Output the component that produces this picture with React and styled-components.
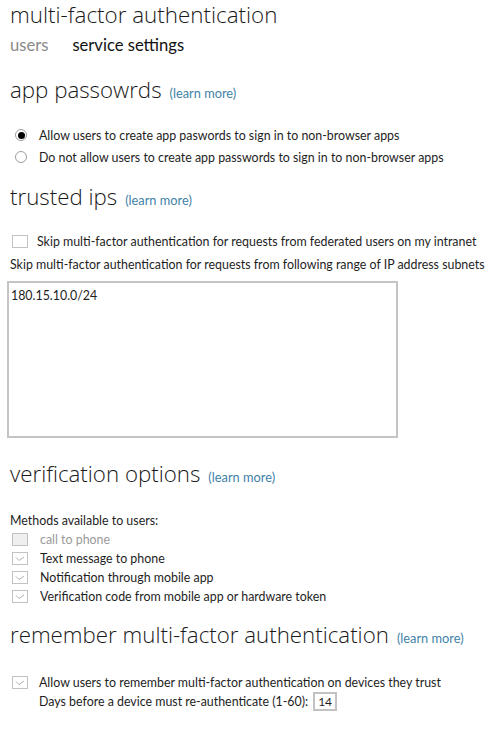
import React from 'react';
import styled, { createGlobalStyle } from 'styled-components';

const GlobalStyle = createGlobalStyle`
  body {
    margin: 0;
    background: #fff;
    font-family: Lato, "Open Sans", sans-serif;
    color: #1e1e1e;
  }
`;

const Page = styled.div`
  display: flex;
  flex-direction: column;
  padding: 2px 0 0 10px;
  width: 489px;
`;

const Title = styled.h1`
  margin: 0;
  font-family: "Open Sans", sans-serif;
  font-weight: 300;
  font-size: 22.4px;
  line-height: 26px;
  color: #1a1a1a;
`;

const Tabs = styled.div`
  display: flex;
  gap: 24px;
  margin-top: 7px;
  font-size: 16.6px;
  line-height: 20px;
`;

const Tab = styled.span`
  color: ${p => (p.$active ? '#111' : '#8a8a8a')};
`;

const SectionHead = styled.h2`
  display: flex;
  align-items: baseline;
  gap: 8px;
  margin: ${p => p.$top || '24px'} 0 0;
  font-family: "Open Sans", sans-serif;
  font-weight: 300;
  font-size: 22.3px;
  line-height: 26px;
  color: #1a1a1a;
`;

const Learn = styled.a`
  font-family: Lato, sans-serif;
  font-weight: 400;
  font-size: 12.8px;
  color: #3f82a8;
  text-decoration: none;
`;

const List = styled.div`
  display: flex;
  flex-direction: column;
  margin-top: ${p => p.$top || '0'};
`;

const Row = styled.label`
  display: flex;
  align-items: center;
  gap: ${p => p.$gap || '12px'};
  height: ${p => p.$h || '19px'};
  padding-left: ${p => p.$indent || '0'};
  font-size: 12.4px;
  color: ${p => (p.$disabled ? '#9a9a9a' : '#1e1e1e')};
`;

const Radio = styled.span`
  box-sizing: border-box;
  width: 12px;
  height: 12px;
  border-radius: 50%;
  border: 1px solid #9d9d9d;
  background: #fff;
  display: flex;
  align-items: center;
  justify-content: center;
  margin-left: 5px;
  &::after {
    content: '';
    width: 7px;
    height: 7px;
    border-radius: 50%;
    background: ${p => (p.$on ? '#000' : 'transparent')};
  }
`;

const Box = styled.span`
  box-sizing: border-box;
  width: 16px;
  height: 13px;
  margin-left: 2px;
  border: 1px solid #c2c2c2;
  background: ${p => (p.$disabled ? '#efefef' : '#fff')};
  display: flex;
  align-items: center;
  justify-content: center;
  flex-shrink: 0;
`;

const Text = styled.div`
  font-size: 12.4px;
  line-height: 19px;
  margin-top: ${p => p.$top || '0'};
`;

const IpArea = styled.div`
  box-sizing: border-box;
  margin: 7px 0 0 -3px;
  width: 391px;
  height: 157px;
  border: 2px solid #c4c4c4;
  padding: 5px 2px;
  font-size: 12.4px;
  line-height: 16px;
`;

const DaysBox = styled.span`
  box-sizing: border-box;
  display: flex;
  align-items: center;
  justify-content: center;
  width: 24px;
  height: 19px;
  border: 2px solid #c2c2c2;
  font-size: 12px;
`;

const Check = () => (
  <svg width="10" height="6" viewBox="0 0 10 6">
    <path d="M1 1.5 L4 4.5 L9 1" fill="none" stroke="#b0b0b0" strokeWidth="1" />
  </svg>
);

const CheckBox = ({ checked, disabled }) => (
  <Box $disabled={disabled}>{checked && <Check />}</Box>
);

export default function App() {
  return (
    <>
      <GlobalStyle />
      <Page>
        <Title>multi-factor authentication</Title>
        <Tabs>
          <Tab>users</Tab>
          <Tab $active>service settings</Tab>
        </Tabs>

        <SectionHead $top="22px">app passowrds <Learn>(learn more)</Learn></SectionHead>
        <List $top="18px">
          <Row $h="22px"><Radio $on />Allow users to create app paswords to sign in to non-browser apps</Row>
          <Row $h="22px"><Radio />Do not allow users to create app passwords to sign in to non-browser apps</Row>
        </List>

        <SectionHead $top="16px">trusted ips <Learn>(learn more)</Learn></SectionHead>
        <List $top="17px">
          <Row $h="22px" $gap="9px"><CheckBox />Skip multi-factor authentication for requests from federated users on my intranet</Row>
        </List>
        <Text $top="3px">Skip multi-factor authentication for requests from following range of IP address subnets</Text>
        <IpArea>180.15.10.0/24</IpArea>

        <SectionHead $top="23px">verification options <Learn>(learn more)</Learn></SectionHead>
        <Text $top="21px">Methods available to users:</Text>
        <List>
          <Row $disabled><CheckBox disabled />call to phone</Row>
          <Row><CheckBox checked />Text message to phone</Row>
          <Row><CheckBox checked />Notification through mobile app</Row>
          <Row><CheckBox checked />Verification code from mobile app or hardware token</Row>
        </List>

        <SectionHead $top="16px">remember multi-factor authentication <Learn>(learn more)</Learn></SectionHead>
        <List $top="22px">
          <Row $gap="11px"><CheckBox checked />Allow users to remember multi-factor authentication on devices they trust</Row>
          <Row $gap="5px" $indent="29px">Days before a device must re-authenticate (1-60): <DaysBox>14</DaysBox></Row>
        </List>
      </Page>
    </>
  );
}
